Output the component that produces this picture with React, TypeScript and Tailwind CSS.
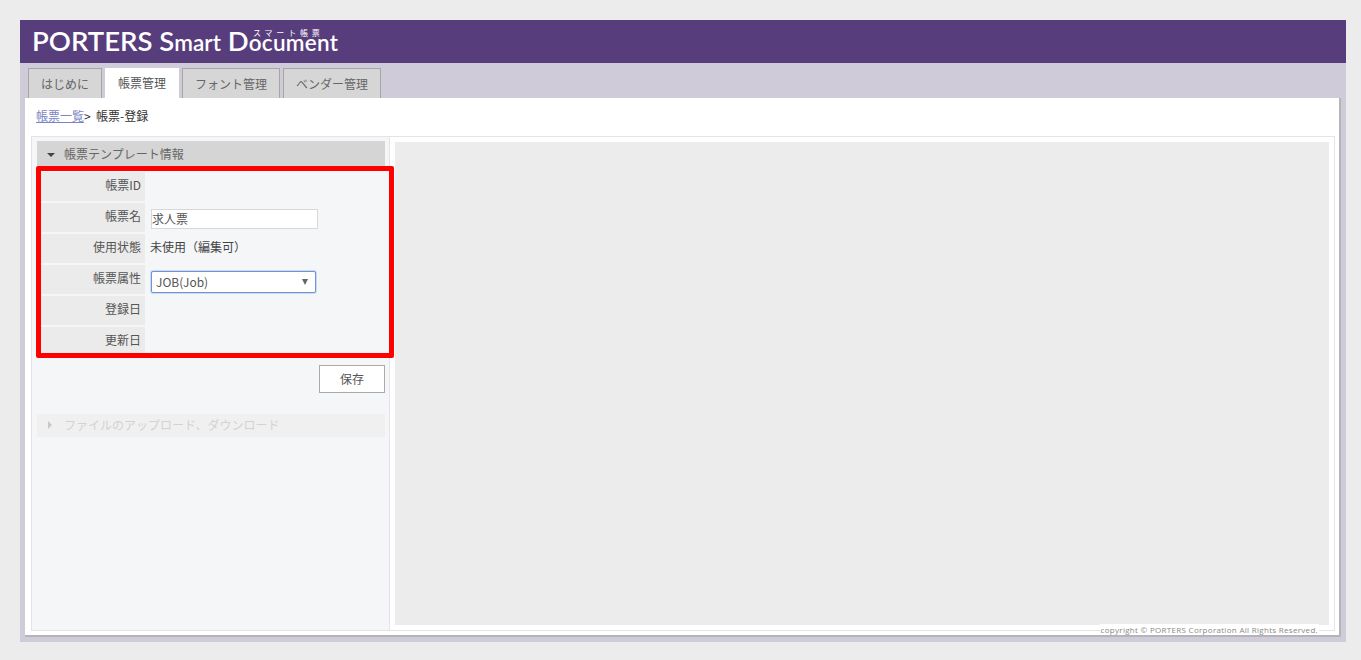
const font = { fontFamily: '"Noto Sans CJK JP", "Open Sans", sans-serif' }

const tabs = [
  { label: 'はじめに', width: 'w-[74px]', active: false },
  { label: '帳票管理', width: 'w-[74px]', active: true },
  { label: 'フォント管理', width: 'w-[98px]', active: false },
  { label: 'ベンダー管理', width: 'w-[98px]', active: false },
]

function Row({ label, children }: { label: string; children?: React.ReactNode }) {
  return (
    <div className="flex h-[29px]">
      <div className="w-[104px] shrink-0 bg-[#ebebeb] pr-[4px] pt-[3px] text-right text-[12px] leading-[20px] text-[#555555]">
        {label}
      </div>
      <div className="flex-1 pl-[6px]">{children}</div>
    </div>
  )
}

export default function App() {
  return (
    <div
      style={font}
      className="h-screen overflow-hidden bg-[#ececec] pb-[18px] pl-[20px] pr-[15px] pt-[20px]"
    >
      <div className="flex h-full flex-col bg-[#d0cbd9]">
        <header className="flex h-[43px] shrink-0 items-center bg-[#573d7c] pl-[12px]">
          <div className="relative whitespace-nowrap font-['Lato',sans-serif] text-[27.5px] font-semibold leading-[43px] text-white">
            PORTERS <span>S</span>
            <span className="text-[22.5px]">mart</span> <span>D</span>
            <span className="text-[22.5px] tracking-[0.3px]">ocument</span>
            <span
              style={font}
              className="absolute left-[221px] top-[9px] text-[8px] font-normal leading-[10px] tracking-[3.8px]"
            >
              スマート帳票
            </span>
          </div>
        </header>

        <nav className="flex h-[35px] shrink-0 gap-[3px] pl-[8px] pt-[5px]">
          {tabs.map((tab) => (
            <div
              key={tab.label}
              className={
                tab.active
                  ? `${tab.width} z-10 h-[31px] bg-white text-center text-[12px] leading-[30px] text-[#555555]`
                  : `${tab.width} h-[30px] border border-b-0 border-[#a6a6a6] bg-[#d6d6d6] text-center text-[12px] leading-[29px] text-[#666666]`
              }
            >
              {tab.label}
            </div>
          ))}
        </nav>

        <main className="mb-[5px] ml-[5px] mr-[5px] flex flex-1 flex-col border-b-2 border-r-2 border-[#b5b5b5] bg-white pb-[4px] pl-[6px] pr-[4px]">
          <div className="flex h-[38px] shrink-0 items-start pl-[5px] pt-[9px] text-[12px] leading-[18px] text-[#333333]">
            <a className="text-[#7a85c4] underline">帳票一覧</a>
            <span>&gt;&nbsp;&nbsp;帳票-登録</span>
          </div>

          <div className="flex min-h-0 flex-1 border border-[#e3e3ea]">
            <div className="relative w-[358px] shrink-0 border-r border-[#e3e3ea] bg-[#f5f6f8] pl-[5px] pr-[4px] pt-[4px]">
              <div className="flex h-[25px] items-center bg-[#d5d5d5] pl-[10px] text-[12px] text-[#666666]">
                <span className="mr-[9px] mt-[3px] border-x-[4px] border-t-[4px] border-x-transparent border-t-[#444444]" />
                帳票テンプレート情報
              </div>

              <div className="mt-[6px] flex flex-col gap-[2px] pl-[4px]">
                <Row label="帳票ID" />
                <Row label="帳票名">
                  <div className="mt-[6px] h-[20px] w-[167px] border border-[#d8d8d8] bg-white text-[12px] leading-[18px] text-[#555555]">
                    求人票
                  </div>
                </Row>
                <Row label="使用状態">
                  <div className="-ml-[1px] pt-[3px] text-[12px] leading-[20px] text-[#444444]">未使用（編集可）</div>
                </Row>
                <Row label="帳票属性">
                  <div className="mt-[6px] flex h-[22px] w-[165px] items-center justify-between rounded-[2px] border border-[#6f94d6] bg-white pl-[4px] pr-[7px] text-[12px] text-[#555555] ring-1 ring-[#6f94d6]/30">
                    JOB(Job)
                    <span className="border-x-[3px] border-t-[6px] border-x-transparent border-t-[#666666]" />
                  </div>
                </Row>
                <Row label="登録日" />
                <Row label="更新日" />
              </div>

              <div className="mt-[9px] flex justify-end">
                <button className="h-[28px] w-[66px] border border-[#aaaaaa] bg-white text-[12px] text-[#555555]">
                  保存
                </button>
              </div>

              <div className="mt-[21px] flex h-[23px] items-center bg-[#f0f0f1] pb-[1px] pl-[11px] text-[12px] text-[#d2d2d4]">
                <span className="mr-[12px] border-y-[4px] border-l-[4px] border-y-transparent border-l-[#c8c8ca]" />
                ファイルのアップロード、ダウンロード
              </div>

              {/* annotation drawn on top of the form */}
              <div className="absolute left-[4px] top-[29px] z-10 h-[192px] w-[358px] rounded-[2px] border-[5px] border-[#ff0000]" />
            </div>

            <div className="relative flex-1 bg-white p-[5px]">
              <div className="h-full bg-[#ececec]" />
              <span className="absolute bottom-[-5px] right-[15px] bg-white px-[1px] font-['Open_Sans',sans-serif] text-[8px] leading-[11px] tracking-[0.3px] text-[#888888]">
                copyright © PORTERS Corporation All Rights Reserved.
              </span>
            </div>
          </div>
        </main>
      </div>
    </div>
  )
}
